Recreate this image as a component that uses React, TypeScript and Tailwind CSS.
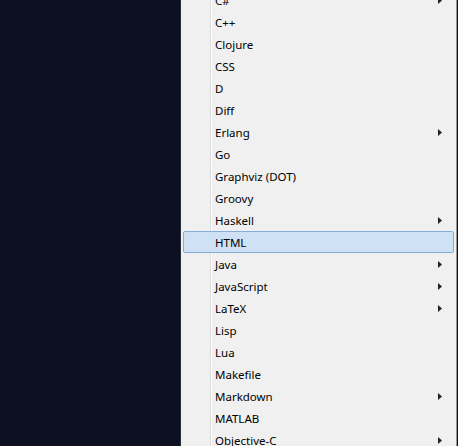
const languages: { name: string; sub?: boolean }[] = [
  { name: "C#", sub: true },
  { name: "C++" },
  { name: "Clojure" },
  { name: "CSS" },
  { name: "D" },
  { name: "Diff" },
  { name: "Erlang", sub: true },
  { name: "Go" },
  { name: "Graphviz (DOT)" },
  { name: "Groovy" },
  { name: "Haskell", sub: true },
  { name: "HTML" },
  { name: "Java", sub: true },
  { name: "JavaScript", sub: true },
  { name: "LaTeX", sub: true },
  { name: "Lisp" },
  { name: "Lua" },
  { name: "Makefile" },
  { name: "Markdown", sub: true },
  { name: "MATLAB" },
  { name: "Objective-C", sub: true },
];

function MenuRow({ item, active }: { item: { name: string; sub?: boolean }; active: boolean }) {
  return (
    <div
      className={`relative flex items-center h-[22px] mx-[2px] pl-[31px] pr-[10px] text-[11.5px] text-black
        ${active ? "bg-[#cfe2f5] border border-[#84acdd] rounded-[2px]" : "border border-transparent"}`}
    >
      <span className="flex-1 leading-none pt-[2px]">{item.name}</span>
      {item.sub && (
        <svg width="4" height="7" viewBox="0 0 4 7" className="mr-[1px]">
          <path d="M0 0 L4 3.5 L0 7 Z" fill="#222" />
        </svg>
      )}
    </div>
  );
}

export default function App() {
  return (
    <div className="flex w-[458px] h-[446px] overflow-hidden bg-[#0c1020]" style={{ fontFamily: '"Noto Sans", "Open Sans", sans-serif' }}>
      <div className="w-[180px] shrink-0" />
      <div className="relative w-[277px] shrink-0 bg-[#f0f0f0] border-l border-[#2a2e3a] border-r border-r-[#979797]">
        {/* icon gutter separator */}
        <div className="absolute top-0 bottom-0 left-[29px] w-[2px] flex">
          <div className="w-px bg-[#dcdddd]" />
          <div className="w-px bg-white" />
        </div>
        <div className="relative -mt-[11px]">
          {languages.map((item, i) => (
            <MenuRow key={i} item={item} active={item.name === "HTML"} />
          ))}
        </div>
      </div>
    </div>
  );
}
